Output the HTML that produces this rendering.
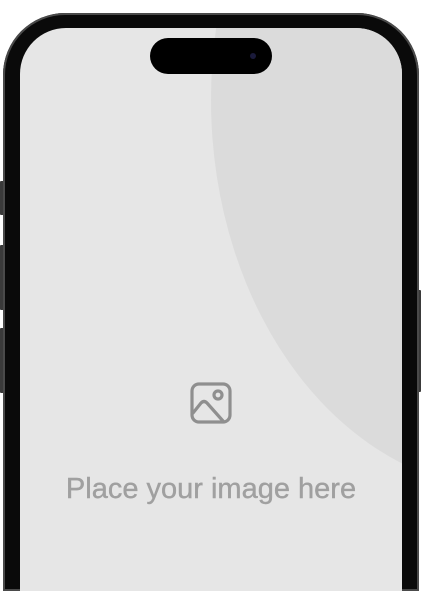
<!DOCTYPE html>
<html><head><style>
html,body{margin:0;padding:0;background:#fff;width:422px;height:591px;overflow:hidden;position:relative;font-family:"Liberation Sans",sans-serif}
.clip{position:absolute;left:0;top:0;width:422px;height:591px;overflow:hidden}
.btn{position:absolute;background:#3a3a3a;border-radius:1px}
.frame{position:absolute;left:3px;top:13px;width:416px;height:578px;background:#0a0a0a;border-radius:62px 62px 0 0;box-shadow:inset 0 0 0 2px #4a4a4a}
.screen{position:absolute;left:20px;top:28px;width:382px;height:563px;background:#e6e6e6;border-radius:46px 46px 0 0;overflow:hidden}
.arc{position:absolute;left:191px;top:-318px;width:600px;height:780px;border-radius:50%;background:#dbdbdb}
.island{position:absolute;left:150px;top:38px;width:122px;height:36px;background:#000;border-radius:18px}
.cam{position:absolute;left:250px;top:53px;width:6px;height:6px;border-radius:50%;background:#1a1a3a}
.txt{position:absolute;left:0;width:422px;top:472px;text-align:center;color:#a0a0a0;font-size:29px;line-height:34px;-webkit-text-stroke:0.4px #a0a0a0}
</style></head><body><div class="clip">
<div class="btn" style="left:0;top:181px;width:5px;height:34px"></div>
<div class="btn" style="left:0;top:245px;width:5px;height:65px"></div>
<div class="btn" style="left:0;top:328px;width:5px;height:65px"></div>
<div class="btn" style="left:416px;top:290px;width:5px;height:102px"></div>
<div class="frame"></div>
<div class="screen"><div class="arc"></div></div>
<div class="island"></div><div class="cam"></div>
<svg style="position:absolute;left:189px;top:381px" width="44" height="44" viewBox="0 0 44 44" fill="none" stroke="#8f8f8f" stroke-width="3.2" stroke-linecap="round" stroke-linejoin="round">
<rect x="3" y="3" width="38" height="38" rx="7"/>
<circle cx="29" cy="14" r="4"/>
<path d="M4 32 L12 22 Q15 19 18 22 L34 40"/>
</svg>
<div class="txt">Place your image here</div>
</div></body></html>
